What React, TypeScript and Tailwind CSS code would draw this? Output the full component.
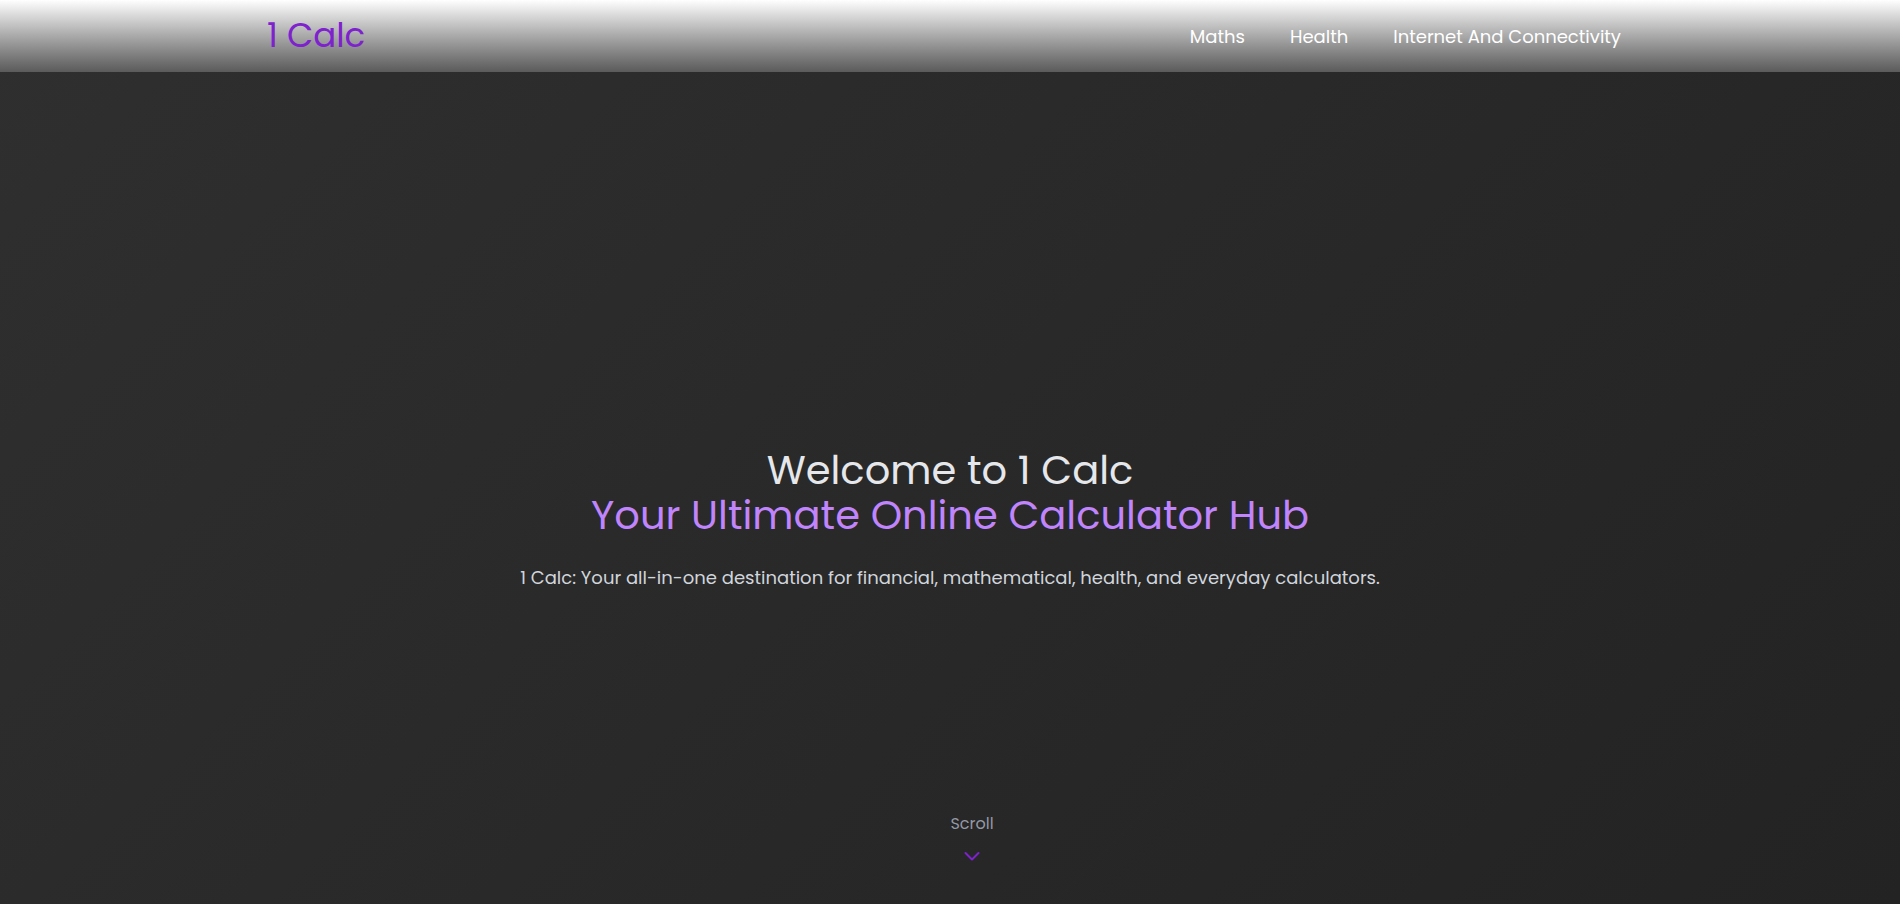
const links = [
  { label: "Maths", href: "#maths" },
  { label: "Health", href: "#health" },
  { label: "Internet And Connectivity", href: "#internet" },
];

export default function App() {
  return (
    <div className="flex min-h-screen flex-col bg-linear-135 from-[#2f2f2f] to-[#232323] font-[Poppins,Inter,sans-serif]">
      <header className="bg-linear-to-b from-white to-[#5b5b5b]">
        <nav aria-label="Main" className="mx-auto flex h-18 w-full max-w-[1366px] items-center justify-between">
          <a href="#home" className="pb-0.5 text-[34px] leading-10 text-[#7e22ce]">1 Calc</a>
          <ul className="flex gap-[45px] pt-0.5 pr-3 text-lg text-white">
            {links.map((link) => (
              <li key={link.label}>
                <a href={link.href}>{link.label}</a>
              </li>
            ))}
          </ul>
        </nav>
      </header>
      <main className="flex flex-1 flex-col items-center">
        <section className="flex flex-1 flex-col items-center justify-end pb-55 text-center">
          <h1 className="text-[40px] leading-[45px] text-gray-200">
            Welcome to 1 Calc
            <span className="block text-[#c084fc]">Your Ultimate Online Calculator Hub</span>
          </h1>
          <p className="mt-[26px] text-lg text-gray-300">
            1 Calc: Your all-in-one destination for financial, mathematical, health, and everyday calculators.
          </p>
        </section>
        <a href="#calculators" className="mb-9 ml-11 flex flex-col items-center gap-2 text-base text-[#9499a5]">
          Scroll
          <svg viewBox="0 0 24 24" className="size-6 text-[#7e22ce]" fill="none" stroke="currentColor" strokeWidth="2" strokeLinecap="round" strokeLinejoin="round" aria-hidden="true">
            <path d="M5.5 9l6.5 6.5 6.5-6.5" />
          </svg>
        </a>
      </main>
    </div>
  );
}
